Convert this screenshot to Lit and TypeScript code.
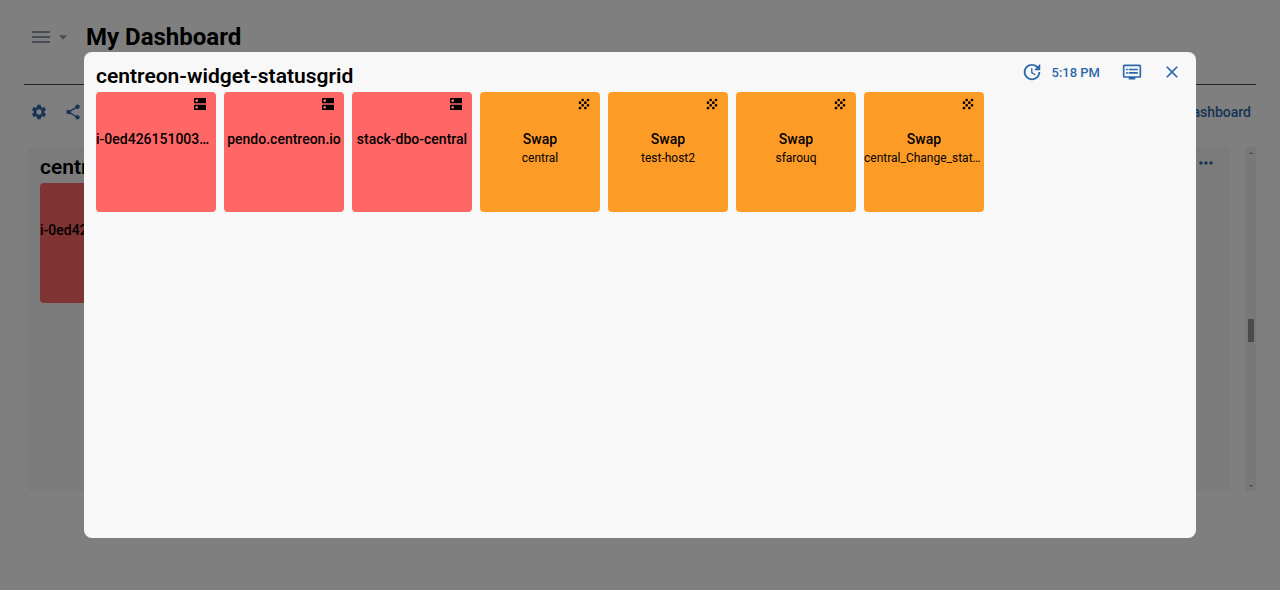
import { LitElement, html, css, svg } from "lit";
import { customElement, property } from "lit/decorators.js";
import { classMap } from "lit/directives/class-map.js";

type Status = "critical" | "warning";

interface Resource {
  name: string;
  parent?: string;
  status: Status;
}

const resources: Resource[] = [
  { name: "i-0ed42615100356abc", status: "critical" },
  { name: "pendo.centreon.io", status: "critical" },
  { name: "stack-dbo-central", status: "critical" },
  { name: "Swap", parent: "central", status: "warning" },
  { name: "Swap", parent: "test-host2", status: "warning" },
  { name: "Swap", parent: "sfarouq", status: "warning" },
  { name: "Swap", parent: "central_Change_status", status: "warning" },
];

const icons = {
  host: svg`<path d="M20 13H4c-.55 0-1 .45-1 1v6c0 .55.45 1 1 1h16c.55 0 1-.45 1-1v-6c0-.55-.45-1-1-1zM7 19c-1.1 0-2-.9-2-2s.9-2 2-2 2 .9 2 2-.9 2-2 2zM20 3H4c-.55 0-1 .45-1 1v6c0 .55.45 1 1 1h16c.55 0 1-.45 1-1V4c0-.55-.45-1-1-1zM7 9c-1.1 0-2-.9-2-2s.9-2 2-2 2 .9 2 2-.9 2-2 2z"/>`,
  service: svg`<path d="M10 12c-1.1 0-2 .9-2 2s.9 2 2 2 2-.9 2-2-.9-2-2-2zM6 8c-1.1 0-2 .9-2 2s.9 2 2 2 2-.9 2-2-.9-2-2-2zm0 8c-1.1 0-2 .9-2 2s.9 2 2 2 2-.9 2-2-.9-2-2-2zm12-8c1.1 0 2-.9 2-2s-.9-2-2-2-2 .9-2 2 .9 2 2 2zm-4 8c-1.1 0-2 .9-2 2s.9 2 2 2 2-.9 2-2-.9-2-2-2zm4-4c-1.1 0-2 .9-2 2s.9 2 2 2 2-.9 2-2-.9-2-2-2zm-4-4c-1.1 0-2 .9-2 2s.9 2 2 2 2-.9 2-2-.9-2-2-2zm-4-4c-1.1 0-2 .9-2 2s.9 2 2 2 2-.9 2-2-.9-2-2-2z"/>`,
  update: svg`<path d="M21 10.12h-6.78l2.74-2.82c-2.73-2.7-7.15-2.8-9.88-.1-2.73 2.71-2.73 7.08 0 9.79s7.15 2.71 9.88 0C18.32 15.65 19 14.08 19 12.1h2c0 1.98-.88 4.55-2.64 6.29-3.51 3.48-9.21 3.48-12.72 0-3.5-3.47-3.53-9.11-.02-12.58s9.14-3.47 12.65 0L21 3v7.12zM12.5 8v4.25l3.5 2.08-.72 1.21L11 13V8h1.5z"/>`,
  log: svg`<path d="M21 3H3c-1.1 0-2 .9-2 2v12c0 1.1.9 2 2 2h5v2h8v-2h5c1.1 0 2-.9 2-2V5c0-1.1-.9-2-2-2zm0 14H3V5h18v12zm-2-9H8v2h11V8zm0 4H8v2h11v-2zM7 8H5v2h2V8zm0 4H5v2h2v-2z"/>`,
  close: svg`<path d="M19 6.41 17.59 5 12 10.59 6.41 5 5 6.41 10.59 12 5 17.59 6.41 19 12 13.41 17.59 19 19 17.59 13.41 12z"/>`,
  menu: svg`<path d="M3 18h18v-2H3v2zm0-5h18v-2H3v2zm0-7v2h18V6H3z"/>`,
  caret: svg`<path d="m7 10 5 5 5-5z"/>`,
  settings: svg`<path d="M19.14 12.94c.04-.3.06-.61.06-.94 0-.32-.02-.64-.07-.94l2.03-1.58c.18-.14.23-.41.12-.61l-1.92-3.32c-.12-.22-.37-.29-.59-.22l-2.39.96c-.5-.38-1.03-.7-1.62-.94l-.36-2.54c-.04-.24-.24-.41-.48-.41h-3.84c-.24 0-.43.17-.47.41l-.36 2.54c-.59.24-1.13.57-1.62.94l-2.39-.96c-.22-.08-.47 0-.59.22L2.74 8.87c-.12.21-.08.47.12.61l2.03 1.58c-.05.3-.09.63-.09.94s.02.64.07.94l-2.03 1.58c-.18.14-.23.41-.12.61l1.92 3.32c.12.22.37.29.59.22l2.39-.96c.5.38 1.03.7 1.62.94l.36 2.54c.05.24.24.41.48.41h3.84c.24 0 .44-.17.47-.41l.36-2.54c.59-.24 1.13-.56 1.62-.94l2.39.96c.22.08.47 0 .59-.22l1.92-3.32c.12-.22.07-.47-.12-.61l-2.01-1.58zM12 15.6c-1.98 0-3.6-1.62-3.6-3.6s1.62-3.6 3.6-3.6 3.6 1.62 3.6 3.6-1.62 3.6-3.6 3.6z"/>`,
  share: svg`<path d="M18 16.08c-.76 0-1.44.3-1.96.77L8.91 12.7c.05-.23.09-.46.09-.7s-.04-.47-.09-.7l7.05-4.11c.54.5 1.25.81 2.04.81 1.66 0 3-1.34 3-3s-1.34-3-3-3-3 1.34-3 3c0 .24.04.47.09.7L8.04 9.81C7.5 9.31 6.79 9 6 9c-1.66 0-3 1.34-3 3s1.34 3 3 3c.79 0 1.5-.31 2.04-.81l7.12 4.16c-.05.21-.08.43-.08.65 0 1.61 1.31 2.92 2.92 2.92s2.92-1.31 2.92-2.92-1.31-2.92-2.92-2.92z"/>`,
  more: svg`<path d="M6 10c-1.1 0-2 .9-2 2s.9 2 2 2 2-.9 2-2-.9-2-2-2zm12 0c-1.1 0-2 .9-2 2s.9 2 2 2 2-.9 2-2-.9-2-2-2zm-6 0c-1.1 0-2 .9-2 2s.9 2 2 2 2-.9 2-2-.9-2-2-2z"/>`,
};

type IconName = keyof typeof icons;

@customElement("ui-icon")
export class UiIcon extends LitElement {
  @property() name: IconName = "host";

  static styles = css`
    :host {
      display: block;
      flex: none;
      width: 20px;
      height: 20px;
    }
    .glyph {
      display: block;
      width: 100%;
      height: 100%;
      fill: currentColor;
    }
  `;

  render() {
    return html`<svg class="glyph" viewBox="0 0 24 24" aria-hidden="true">${icons[this.name]}</svg>`;
  }
}

@customElement("status-tile")
export class StatusTile extends LitElement {
  @property({ attribute: false }) resource!: Resource;

  static styles = css`
    :host {
      display: block;
    }
    .tile {
      box-sizing: border-box;
      height: 120px;
      padding-top: 4px;
      border-radius: 4px;
      color: #000;
      text-align: center;
    }
    .critical {
      background: #ff6666;
    }
    .warning {
      background: #fd9b27;
    }
    .kind {
      width: 16px;
      height: 16px;
      margin: 0 8px 16px auto;
    }
    .name,
    .parent {
      margin: 0;
      overflow: hidden;
      text-overflow: ellipsis;
      white-space: nowrap;
    }
    .name {
      font-size: 14px;
      font-weight: 500;
      line-height: 22px;
    }
    .parent {
      font-size: 12px;
      line-height: 16px;
    }
  `;

  render() {
    const { name, parent, status } = this.resource;
    return html`
      <div class=${classMap({ tile: true, [status]: true })}>
        <ui-icon class="kind" name=${parent ? "service" : "host"}></ui-icon>
        <p class="name">${name}</p>
        ${parent ? html`<p class="parent">${parent}</p>` : null}
      </div>
    `;
  }
}

@customElement("app-root")
export class AppRoot extends LitElement {
  static styles = css`
    :host {
      display: block;
      min-height: 100vh;
      background: #fff;
      color: #000;
      font-family: Roboto, sans-serif;
      font-size: 14px;
    }
    .page {
      padding: 16px 24px 0;
    }
    button {
      display: flex;
      align-items: center;
      justify-content: center;
      margin: 0;
      padding: 0;
      border: 0;
      background: none;
      color: #2e68aa;
      font: inherit;
      font-weight: 500;
    }
    .header {
      display: flex;
      align-items: center;
      height: 69px;
      padding: 0 5px 26px;
      box-sizing: border-box;
      border-bottom: 1px solid #4a4a4a;
    }
    .menu {
      color: #9198a8;
    }
    .burger {
      width: 24px;
      height: 24px;
    }
    .caret {
      width: 20px;
      height: 20px;
    }
    .page-title {
      margin: 0 0 0 13px;
      font-size: 24px;
      font-weight: 700;
      line-height: 28px;
    }
    .toolbar {
      display: flex;
      align-items: center;
      gap: 16px;
      height: 54px;
      padding: 0 5px 0 6px;
    }
    .tool {
      width: 18px;
      height: 18px;
    }
    .edit {
      margin-left: auto;
    }
    .board {
      display: flex;
      gap: 16px;
      height: 344px;
      padding: 8px 0 0 4px;
    }
    .panel {
      flex: 1;
      min-width: 0;
      box-sizing: border-box;
      padding: 5px 12px 12px;
      border-radius: 4px;
      background: #f6f6f6;
    }
    .panel-head,
    .dialog-head {
      display: flex;
      justify-content: space-between;
      height: 31px;
    }
    .widget-title {
      margin: 0;
      font-size: 21px;
      font-weight: 600;
      line-height: 30px;
    }
    .more {
      height: 22px;
      padding-right: 2px;
    }
    .grid {
      display: grid;
      grid-template-columns: repeat(auto-fill, 120px);
      gap: 8px;
    }
    .rail {
      display: flex;
      flex-direction: column;
      align-items: center;
      justify-content: space-between;
      width: 10px;
      box-sizing: border-box;
      padding: 5px 0 4px;
      background: #f0f0f0;
    }
    .step {
      width: 0;
      height: 0;
      border: 2px solid transparent;
    }
    .step-up {
      border-top-width: 0;
      border-bottom-color: #888;
    }
    .step-down {
      border-bottom-width: 0;
      border-top-color: #888;
    }
    .thumb {
      width: 6px;
      height: 23px;
      margin-top: 22px;
      background: #969696;
    }
    .backdrop {
      position: fixed;
      inset: 0;
      display: flex;
      box-sizing: border-box;
      padding: 52px 84px;
      background: rgba(0, 0, 0, 0.5);
    }
    .dialog {
      flex: 1;
      min-width: 0;
      box-sizing: border-box;
      padding: 9px 12px;
      border-radius: 8px;
      background: #f8f8f8;
    }
    .actions {
      display: flex;
      align-items: center;
      gap: 20px;
      height: 22px;
      padding-right: 2px;
    }
    .refresh {
      gap: 9px;
      padding-right: 2px;
      font-size: 13px;
    }
    .clock {
      width: 22px;
      height: 22px;
    }
  `;

  render() {
    return html`
      <main class="page">
        <header class="header">
          <button class="menu" aria-label="Dashboards">
            <ui-icon class="burger" name="menu"></ui-icon>
            <ui-icon class="caret" name="caret"></ui-icon>
          </button>
          <h1 class="page-title">My Dashboard</h1>
        </header>
        <div class="toolbar">
          <button aria-label="Settings"><ui-icon class="tool" name="settings"></ui-icon></button>
          <button aria-label="Share"><ui-icon class="tool" name="share"></ui-icon></button>
          <button class="edit">Edit Dashboard</button>
        </div>
        <div class="board">
          <section class="panel">
            <div class="panel-head">
              <h2 class="widget-title">centreon-widget-statusgrid</h2>
              <button class="more" aria-label="More actions"><ui-icon name="more"></ui-icon></button>
            </div>
            <div class="grid"><status-tile .resource=${resources[0]}></status-tile></div>
          </section>
          <div class="rail" aria-hidden="true">
            <span class="step step-up"></span>
            <span class="thumb"></span>
            <span class="step step-down"></span>
          </div>
        </div>
      </main>
      <div class="backdrop">
        <section class="dialog" role="dialog" aria-modal="true" aria-labelledby="dialog-title">
          <div class="dialog-head">
            <h2 class="widget-title" id="dialog-title">centreon-widget-statusgrid</h2>
            <div class="actions">
              <button class="refresh" aria-label="Refresh, last update 5:18 PM">
                <ui-icon class="clock" name="update"></ui-icon>
                <span>5:18 PM</span>
              </button>
              <button aria-label="See more details"><ui-icon name="log"></ui-icon></button>
              <button aria-label="Close"><ui-icon name="close"></ui-icon></button>
            </div>
          </div>
          <div class="grid">
            ${resources.map((r) => html`<status-tile .resource=${r}></status-tile>`)}
          </div>
        </section>
      </div>
    `;
  }
}
